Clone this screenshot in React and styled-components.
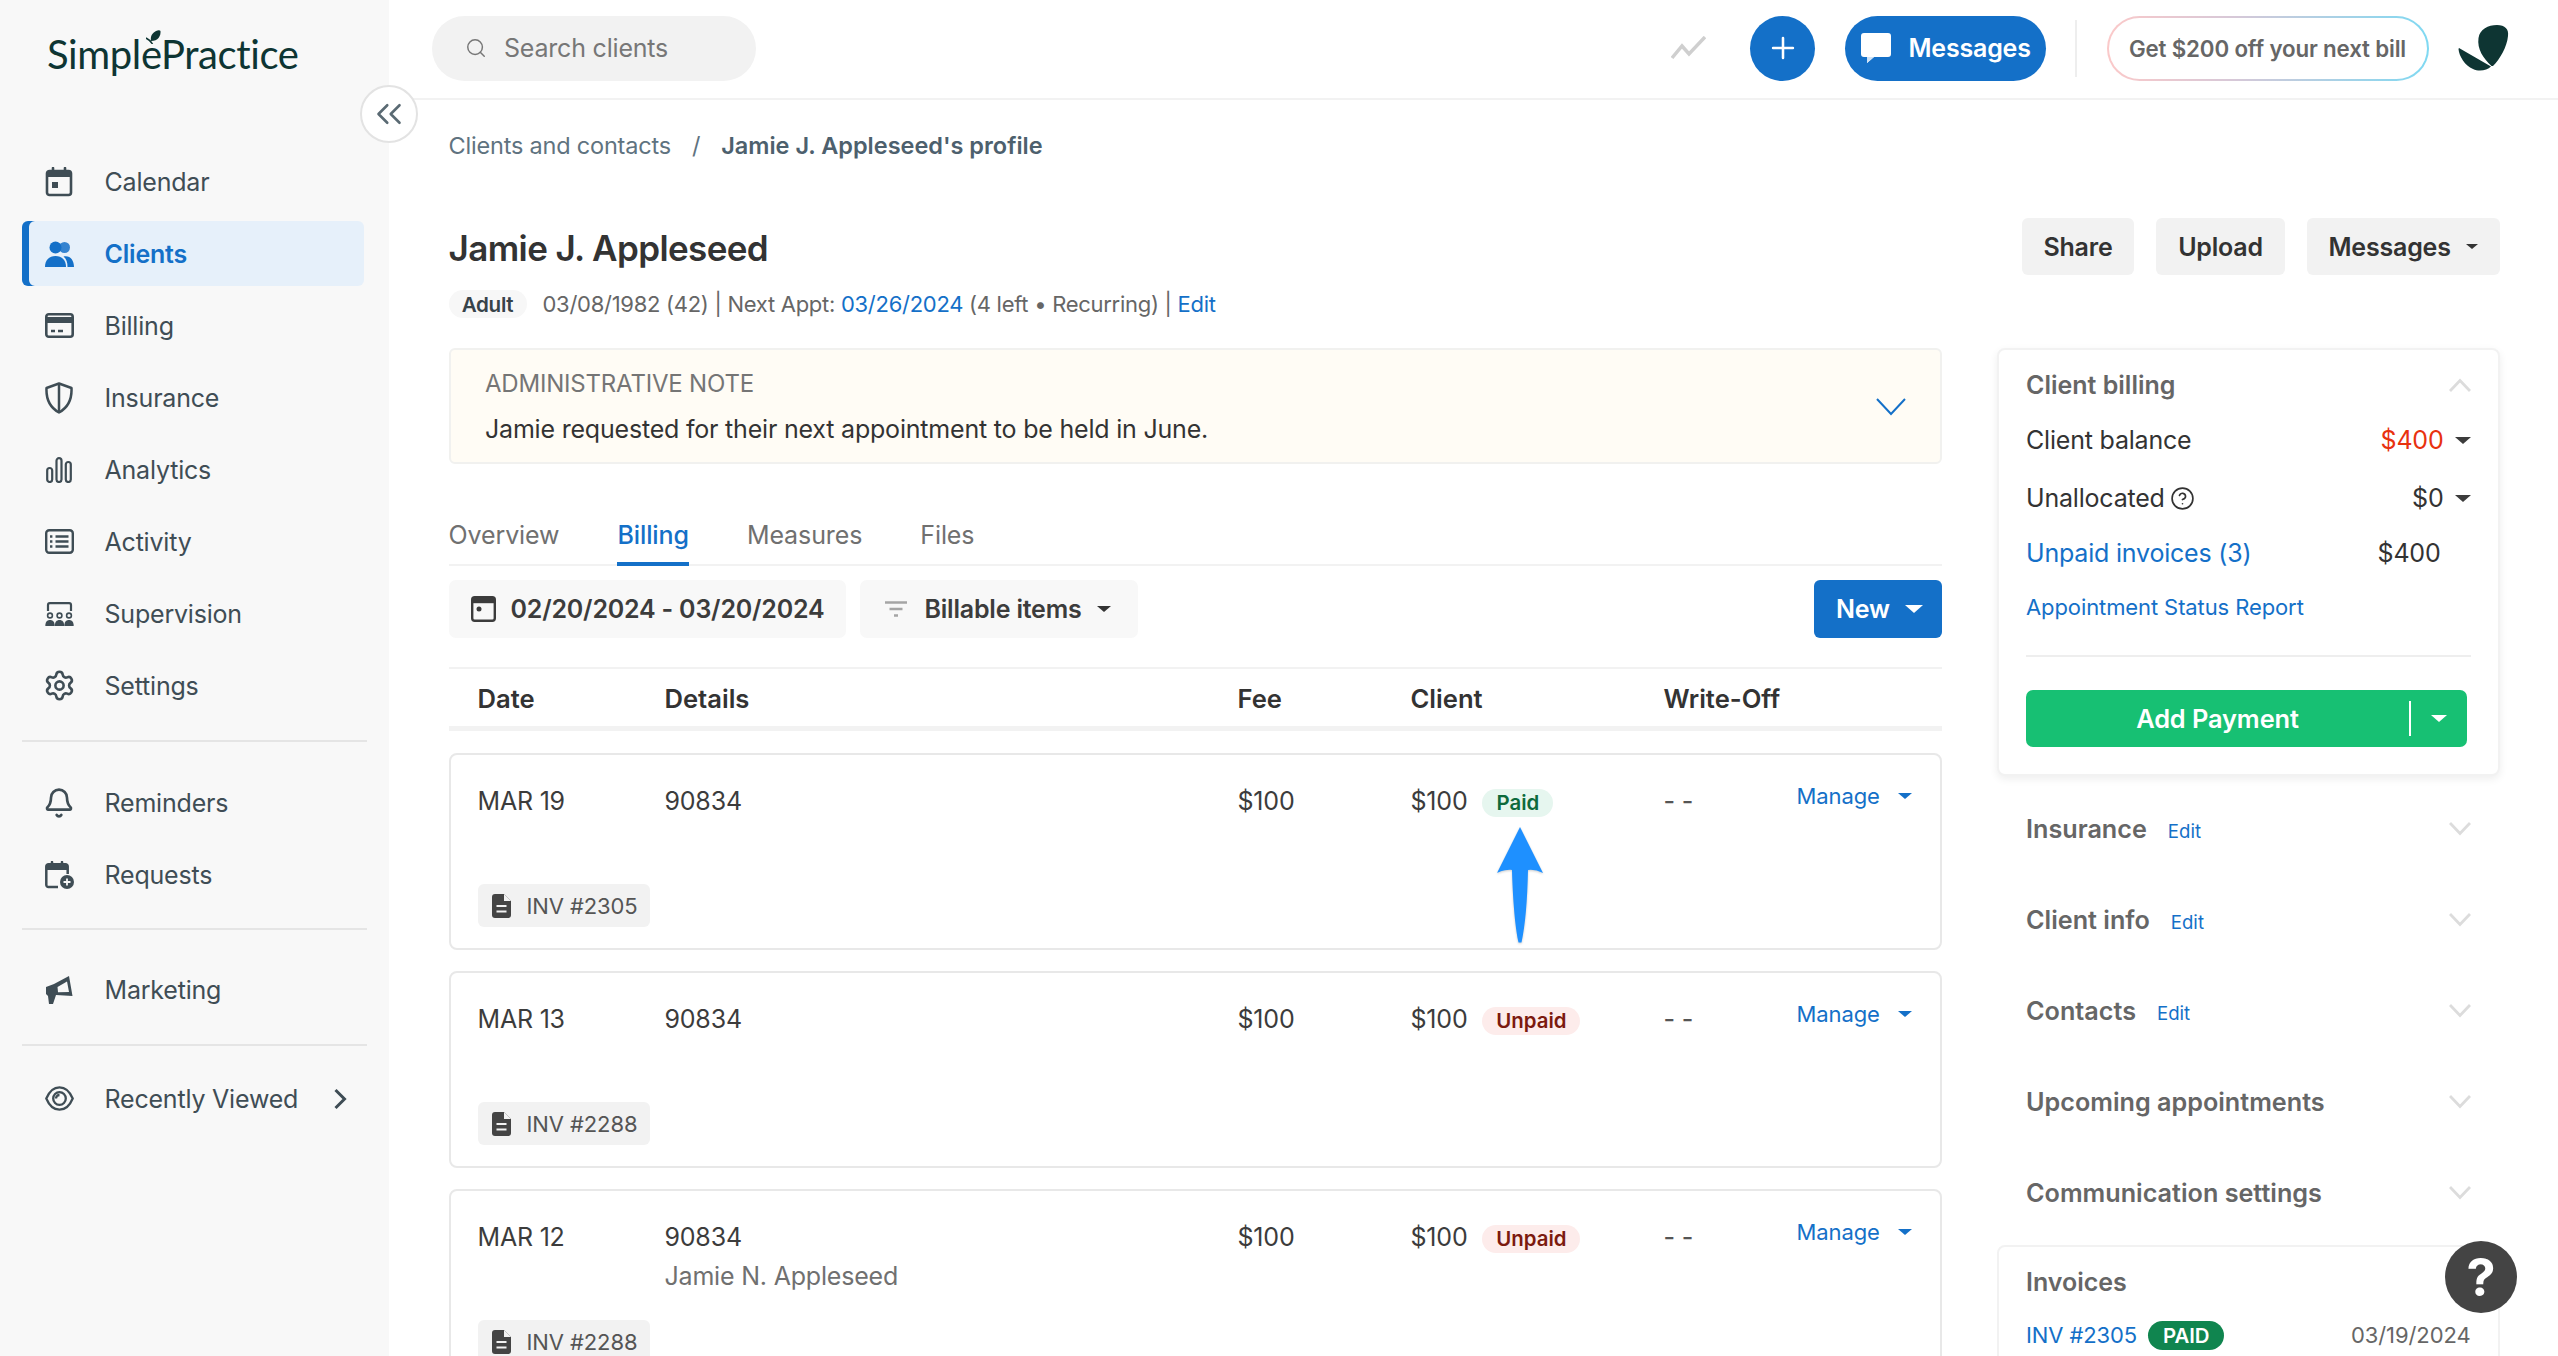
import React from "react";
import styled, { createGlobalStyle } from "styled-components";
import { ChevronsLeft, CircleHelp, Plus, Search, Bell, Settings } from "lucide-react";

const Global = createGlobalStyle`
  html, body { margin: 0; padding: 0; background: #fff; }
  body { font-family: Inter, "Liberation Sans", sans-serif; color: #333; }
  * { box-sizing: border-box; }
`;

const BLUE = "#1470c8";

const Page = styled.div`
  position: relative;
  display: flex;
  width: 2558px;
  height: 1356px;
  overflow: hidden;
  font-size: 25px;
  letter-spacing: -0.2px;
`;

/* ---------- sidebar ---------- */
const Sidebar = styled.aside`
  flex: 0 0 389px;
  background: #f8f8f8;
  padding: 0 22px;
`;
const LogoWrap = styled.div`
  height: 149px;
  padding: 30px 0 0 25px;
`;
const LogoText = styled.div`
  position: relative;
  display: inline-block;
  font-family: Lato, sans-serif;
  font-size: 40px;
  line-height: 48px;
  letter-spacing: -0.4px;
  color: #0e3533;
`;
const LogoLeaf = styled.svg`
  position: absolute;
  left: 99px;
  top: 0;
  width: 15px;
  height: 14px;
`;
const NavGroup = styled.nav`
  display: flex;
  flex-direction: column;
  gap: 7px;
`;
const NavItem = styled.a`
  display: flex;
  align-items: center;
  gap: 31.5px;
  height: 65px;
  padding: 0 17px 0 23px;
  width: 342px;
  border-radius: 6px;
  white-space: nowrap;
  color: ${(p) => (p.$active ? BLUE : "#3f4d55")};
  background: ${(p) => (p.$active ? "#e6f0fa" : "transparent")};
  box-shadow: ${(p) => (p.$active ? `inset 7px 0 0 ${BLUE}` : "none")};
  font-weight: ${(p) => (p.$active ? 600 : 400)};
`;
const NavIcon = styled.span`
  flex: 0 0 28px;
  width: 28px;
  height: 34px;
  display: flex;
  align-items: center;
  justify-content: center;
  svg { display: block; flex: none; }
`;
const NavLabel = styled.span`
  flex: 1;
`;
const NavRule = styled.hr`
  border: 0;
  border-top: 2px solid #e5e5e5;
  margin: ${(p) => p.$top}px 0 ${(p) => p.$bottom}px;
  width: 345px;
`;

/* ---------- main ---------- */
const Main = styled.main`
  flex: 1;
  min-width: 0;
  display: flex;
  flex-direction: column;
`;
const Header = styled.header`
  flex: 0 0 100px;
  display: flex;
  align-items: center;
  gap: 29.5px;
  padding: 0 49px 2px 43px;
  border-bottom: 2px solid #f2f2f2;
`;
const SearchBox = styled.div`
  display: flex;
  align-items: center;
  gap: 17px;
  width: 324px;
  height: 65px;
  padding-left: 33px;
  margin-right: auto;
  border-radius: 33px;
  background: #f2f2f2;
  color: #777;
`;
const RoundPlus = styled.button`
  width: 65px;
  height: 65px;
  padding: 0;
  border: 0;
  border-radius: 50%;
  background: ${BLUE};
  color: #fff;
  display: flex;
  align-items: center;
  justify-content: center;
`;
const TrendIcon = styled.svg`
  width: 35px;
  height: 24px;
  margin-right: 14.5px;
`;
const MessagesPill = styled.button`
  display: flex;
  align-items: center;
  gap: 18px;
  width: 201px;
  height: 65px;
  padding: 0 0 0 16px;
  border: 0;
  border-radius: 33px;
  background: ${BLUE};
  color: #fff;
  font: 600 25px Inter, sans-serif;
  letter-spacing: -0.2px;
`;
const HeadRule = styled.div`
  width: 2px;
  height: 57px;
  background: #eeeeee;
`;
const PromoPill = styled.div`
  display: flex;
  align-items: center;
  justify-content: center;
  width: 322px;
  height: 65px;
  border: 2px solid transparent;
  border-radius: 33px;
  background: linear-gradient(#fff, #fff) padding-box,
    linear-gradient(90deg, #fbc9c9, #d6c8d8 40%, #7fd9f2) border-box;
  color: #666;
  font-weight: 600;
  font-size: 22.3px;
  letter-spacing: -0.15px;
`;
const CollapseButton = styled.button`
  position: absolute;
  left: 360px;
  top: 85px;
  width: 58px;
  height: 58px;
  padding: 0;
  border: 2px solid #e3e3e3;
  border-radius: 50%;
  background: #fff;
  color: #5a6a73;
  display: flex;
  align-items: center;
  justify-content: center;
`;
const Content = styled.div`
  flex: 1;
  min-height: 0;
  padding: 29px 58px 0 59.5px;
`;
const Crumbs = styled.div`
  display: flex;
  align-items: center;
  height: 32px;
  color: #5f7380;
  font-size: 23.5px;
`;
const CrumbSep = styled.span`
  margin: 0 21px;
`;
const CrumbNow = styled.span`
  font-weight: 600;
  color: #4d606d;
  letter-spacing: 0;
`;
const TitleRow = styled.div`
  display: flex;
  align-items: center;
  height: 57px;
  margin-top: 57px;
  gap: 22px;
`;
const Title = styled.h1`
  margin: 0 auto 0 0;
  padding-top: 2px;
  font-size: 35px;
  font-weight: 600;
  letter-spacing: -0.6px;
  color: #333;
`;
const GreyButton = styled.button`
  display: flex;
  align-items: center;
  gap: 15.5px;
  height: 57px;
  padding: 0 21.8px;
  border: 0;
  border-radius: 6px;
  background: #f2f2f2;
  color: #333;
  font: 600 25px Inter, sans-serif;
  letter-spacing: -0.2px;
`;
const Caret = styled.span`
  display: inline-block;
  width: 0;
  height: 0;
  flex: none;
  border-left: ${(p) => p.$size || 7}px solid transparent;
  border-right: ${(p) => p.$size || 7}px solid transparent;
  border-top: ${(p) => (p.$size || 7) - 0.5}px solid ${(p) => p.$color || "#333"};
`;
const MetaRow = styled.div`
  display: flex;
  align-items: center;
  height: 28px;
  margin-top: 15px;
  color: #666;
  font-size: 22px;
  letter-spacing: -0.28px;
`;
const AdultPill = styled.span`
  display: flex;
  align-items: center;
  justify-content: center;
  width: 78px;
  height: 28px;
  margin-right: 16px;
  border-radius: 14px;
  background: #f7f7f7;
  color: #37434a;
  font-weight: 600;
  font-size: 20.6px;
`;
const Link = styled.a`
  color: ${BLUE};
`;
const Columns = styled.div`
  display: flex;
  gap: 54.5px;
  margin-top: 30px;
`;
const LeftCol = styled.div`
  flex: 0 0 1493.5px;
  min-width: 0;
`;
const RightCol = styled.div`
  flex: 0 0 503px;
  display: flex;
  flex-direction: column;
`;

/* note */
const Note = styled.div`
  display: flex;
  align-items: center;
  justify-content: space-between;
  height: 116px;
  padding: 0 34px 0 34.5px;
  background: #fffcf5;
  border: 2px solid #f1f1ef;
  border-radius: 6px;
`;
const NoteTitle = styled.div`
  font-size: 24px;
  line-height: 32px;
  color: #757575;
`;
const NoteBody = styled.div`
  margin-top: 13px;
  line-height: 32px;
  color: #333;
`;
const NoteChevron = styled.svg`
  width: 30px;
  height: 18px;
  margin-top: 2px;
  flex: none;
`;

/* tabs */
const Tabs = styled.div`
  display: flex;
  gap: 58px;
  height: 47px;
  margin-top: 55px;
  border-bottom: 2px solid #f2f2f2;
`;
const Tab = styled.div`
  height: 47px;
  line-height: 32px;
  letter-spacing: -0.1px;
  border-bottom: 4px solid ${(p) => (p.$active ? BLUE : "transparent")};
  color: ${(p) => (p.$active ? BLUE : "#707070")};
  font-weight: ${(p) => (p.$active ? 500 : 400)};
`;

/* toolbar */
const Toolbar = styled.div`
  display: flex;
  align-items: center;
  gap: 14px;
  margin-top: 14px;
  padding-bottom: 29px;
  border-bottom: 2px solid #f2f2f2;
`;
const FilterButton = styled.button`
  display: flex;
  align-items: center;
  gap: ${(p) => p.$gap}px;
  width: ${(p) => p.$width}px;
  height: 58px;
  padding: 0 0 0 ${(p) => p.$left}px;
  border: 0;
  border-radius: 7px;
  background: #f8f8f8;
  color: #3c3c3c;
  font: 600 25px Inter, sans-serif;
  letter-spacing: -0.2px;
`;
const CaretNudge = styled.span`
  display: flex;
  margin-left: -3px;
`;
const NewButton = styled.button`
  display: flex;
  align-items: center;
  gap: 15px;
  margin-left: auto;
  width: 128px;
  height: 58px;
  padding: 0 0 0 22px;
  border: 0;
  border-radius: 6px;
  background: ${BLUE};
  color: #fff;
  font: 600 25px Inter, sans-serif;
  letter-spacing: -0.2px;
`;

/* table */
const cols = "187px 573px 173px 253px 133px 1fr";
const TableHead = styled.div`
  display: grid;
  grid-template-columns: ${cols};
  align-items: center;
  height: 62px;
  padding: 1px 0 0 29px;
  border-bottom: 5px solid #f2f2f2;
  font-weight: 600;
  font-size: 25.6px;
  letter-spacing: 0;
  color: #333;
`;
const Rows = styled.div`
  display: flex;
  flex-direction: column;
  gap: 21px;
  margin-top: 22px;
`;
const Row = styled.div`
  position: relative;
  flex: 0 0 197px;
  display: flex;
  flex-direction: column;
  justify-content: space-between;
  padding: 30px 0 21px 27px;
  border: 2px solid #e8e8e8;
  border-radius: 8px;
`;
const RowGrid = styled.div`
  display: grid;
  grid-template-columns: ${cols};
  align-items: start;
  line-height: 32px;
  color: #3c3c3c;
`;
const SubLine = styled.div`
  margin-top: 7px;
  color: #707070;
`;
const ClientCell = styled.div`
  display: flex;
  align-items: center;
  gap: 15px;
`;
const StatusPill = styled.span`
  display: inline-flex;
  align-items: center;
  justify-content: center;
  width: ${(p) => (p.$unpaid ? 98 : 71)}px;
  height: 28px;
  margin-top: 4px;
  border-radius: 14px;
  font-size: 20.4px;
  letter-spacing: 0;
  font-weight: 600;
  background: ${(p) => (p.$unpaid ? "#fdeceb" : "#e6f6ef")};
  color: ${(p) => (p.$unpaid ? "#7c1a0f" : "#0d6a3c")};
`;
const ManageCell = styled.div`
  display: flex;
  align-items: center;
  gap: 18px;
  margin-top: -5px;
  color: ${BLUE};
  font-size: 22px;
  letter-spacing: -0.1px;
`;
const Dash = styled.span`
  font-weight: 500;
  color: #555;
  letter-spacing: 0;
`;
const InvTag = styled.div`
  display: inline-flex;
  align-items: center;
  align-self: flex-start;
  gap: 16px;
  width: 172px;
  height: 43px;
  padding-left: 14px;
  border-radius: 6px;
  background: #f2f2f2;
  color: #555;
  font-size: 22px;
  letter-spacing: -0.1px;
`;
const UpArrow = styled.svg`
  position: absolute;
  left: 1046px;
  top: 72px;
  width: 46px;
  height: 116px;
  filter: drop-shadow(0 1px 1px rgba(0, 0, 0, 0.2));
`;

/* right cards */
const Card = styled.section`
  background: #fff;
  border: 2px solid #f2f2f2;
  border-radius: 8px;
  padding: 19px 27px 27px 27.5px;
  box-shadow: ${(p) => (p.$flat ? "none" : "0 3px 8px rgba(0,0,0,.07)")};
`;
const CardHead = styled.div`
  display: flex;
  align-items: center;
  justify-content: space-between;
  height: 32px;
  color: #666;
  font-weight: 600;
  letter-spacing: 0;
`;
const BalanceRow = styled.div`
  display: flex;
  align-items: center;
  justify-content: space-between;
  height: 32px;
  margin-top: ${(p) => p.$top}px;
  color: #333;
`;
const Help = styled.span`
  display: inline-flex;
  align-items: center;
  gap: 5px;
`;
const Amount = styled.span`
  display: flex;
  align-items: center;
  gap: 11px;
  color: ${(p) => (p.$red ? "#e8320f" : "#333")};
  padding-right: ${(p) => (p.$plain ? 30 : 0)}px;
`;
const ReportLink = styled.a`
  display: block;
  height: 28px;
  line-height: 28px;
  margin-top: 24px;
  font-size: 22px;
  letter-spacing: -0.1px;
  color: ${BLUE};
`;
const CardRule = styled.hr`
  border: 0;
  border-top: 2px solid #eee;
  margin: 34px 0 33px;
`;
const PayButton = styled.button`
  display: flex;
  align-items: center;
  width: 441px;
  height: 57px;
  padding: 0;
  border: 0;
  border-radius: 7px;
  background: #17c073;
  color: #fff;
  font: 600 25.4px Inter, sans-serif;
  letter-spacing: -0.1px;
`;
const PayLabel = styled.span`
  flex: 1;
  text-align: center;
`;
const PaySplit = styled.span`
  flex: 0 0 58px;
  height: 35px;
  display: flex;
  align-items: center;
  justify-content: center;
  border-left: 2px solid #fff;
`;
const Accordion = styled.div`
  display: flex;
  flex-direction: column;
  gap: 51px;
  margin-top: 33px;
  padding: 0 29px 0 29.5px;
`;
const AccordionRow = styled.div`
  display: flex;
  align-items: center;
  height: 40px;
  color: #666;
  font-weight: 600;
  font-size: 25.2px;
  letter-spacing: 0;
`;
const EditLink = styled.a`
  margin: 4px 0 0 21px;
  font-size: 18.6px;
  font-weight: 400;
  color: ${BLUE};
`;
const ChevronMark = styled.svg`
  width: 22px;
  height: 14px;
  flex: none;
  margin-left: auto;
`;
const InvoicesCard = styled(Card)`
  margin-top: 32px;
  padding-top: 19px;
  height: 200px;
`;
const InvoiceLine = styled.div`
  display: flex;
  align-items: center;
  height: 32px;
  margin-top: 21px;
  font-size: 22px;
  letter-spacing: -0.1px;
`;
const PaidBadge = styled.span`
  display: inline-flex;
  align-items: center;
  justify-content: center;
  width: 76px;
  height: 29px;
  margin-left: 11px;
  border-radius: 15px;
  background: #10854f;
  color: #fff;
  font-size: 20.4px;
  font-weight: 600;
`;
const InvDate = styled.span`
  margin-left: auto;
  color: #666;
`;
const HelpBubble = styled.button`
  position: absolute;
  left: 2445px;
  top: 1241px;
  width: 72px;
  height: 72px;
  padding: 0;
  border: 0;
  border-radius: 50%;
  background: #444;
  color: #fff;
  font: 700 52px Inter, sans-serif;
  display: flex;
  align-items: center;
  justify-content: center;
`;
const BrandMark = styled.svg`
  flex: 0 0 51px;
  width: 51px;
  height: 48px;
`;

/* ---------- drawn icons ---------- */
const ic = "#3f4d55";
const CalendarIcon = () => (
  <svg width="28" height="30" viewBox="0 0 28 30" fill="none">
    <path d="M8 1v5M20 1v5" stroke={ic} strokeWidth="2.6" strokeLinecap="round" />
    <rect x="2" y="4" width="24" height="24" rx="2.5" stroke={ic} strokeWidth="2.6" />
    <rect x="2" y="4" width="24" height="6" fill={ic} />
    <rect x="7" y="15" width="6" height="6" fill={ic} />
  </svg>
);
const ClientsIcon = () => (
  <svg width="29" height="26" viewBox="0 0 29 26" fill={BLUE}>
    <circle cx="19.5" cy="6.5" r="5.5" opacity=".85" />
    <circle cx="10.5" cy="6.5" r="6" />
    <path d="M0 26c0-7 4-11 10.5-11S21 19 21 26z" />
    <path d="M22.5 26c0-4.5-1-8-4-10.5 6.5-1.5 10.5 3.5 10.5 10.5z" />
  </svg>
);
const BillingIcon = () => (
  <svg width="29" height="25" viewBox="0 0 29 25" fill="none">
    <rect x="1.3" y="1.3" width="26.4" height="22.4" rx="2.5" stroke={ic} strokeWidth="2.6" />
    <rect x="1.3" y="4" width="26.4" height="6" fill={ic} />
    <path d="M6 18h4M13 18h5" stroke={ic} strokeWidth="2.6" />
  </svg>
);
const ShieldIcon = () => (
  <svg width="28" height="32" viewBox="0 0 28 32" fill="none" stroke={ic} strokeWidth="2.5" strokeLinejoin="round">
    <path d="M14 1.5 26.5 6c.5 11-2.5 19-12.5 24.5C4 25 1 17 1.5 6z" />
    <path d="M14 1.5v29" />
  </svg>
);
const AnalyticsIcon = () => (
  <svg width="26" height="26" viewBox="0 0 26 26" fill="none" stroke={ic} strokeWidth="2.2">
    <rect x="1.2" y="11" width="5" height="14" rx="2.5" />
    <rect x="10.5" y="1.2" width="5" height="23.8" rx="2.5" />
    <rect x="19.8" y="5" width="5" height="20" rx="2.5" />
  </svg>
);
const ActivityIcon = () => (
  <svg width="29" height="25" viewBox="0 0 29 25" fill="none" stroke={ic} strokeWidth="2.4">
    <rect x="1.2" y="1.2" width="26.6" height="22.6" rx="3" />
    <path d="M10.5 7.5h13M10.5 12.5h13M10.5 17.5h13" />
    <path d="M5 7.5h2.4M5 12.5h2.4M5 17.5h2.4" />
  </svg>
);
const SupervisionIcon = () => (
  <svg width="29" height="24" viewBox="0 0 29 24" fill={ic}>
    <path d="M3 9V3a1.8 1.8 0 0 1 1.8-1.8h19.4A1.8 1.8 0 0 1 26 3v6" fill="none" stroke={ic} strokeWidth="2.2" />
    {[5, 14.5, 24].map((x) => (
      <g key={x}>
        <circle cx={x} cy="13.5" r="2.4" fill="#f8f8f8" stroke={ic} strokeWidth="1.6" />
        <path d={`M${x - 4.7} 24c0-4 1.7-6 4.7-6s4.7 2 4.7 6z`} />
      </g>
    ))}
  </svg>
);
const RequestsIcon = () => (
  <svg width="29" height="28" viewBox="0 0 29 28" fill="none">
    <path d="M7 1v4M17 1v4" stroke={ic} strokeWidth="2.5" strokeLinecap="round" />
    <path d="M13 26H3.5A2.2 2.2 0 0 1 1.3 24V5.5a2.2 2.2 0 0 1 2.2-2.2h17a2.2 2.2 0 0 1 2.2 2.2V13" stroke={ic} strokeWidth="2.5" />
    <rect x="1.3" y="4" width="21.4" height="5" fill={ic} />
    <circle cx="22" cy="21" r="7" fill={ic} />
    <path d="M22 17.5v7M18.5 21h7" stroke="#f8f8f8" strokeWidth="1.8" />
  </svg>
);
const MegaphoneIcon = () => (
  <svg width="28" height="28" viewBox="0 0 28 28" fill={ic}>
    <path d="M1 11 9 8 24 0l3.5 20L11 19l-3 9H4l-1-8-2-2z" />
    <path d="M12.5 11 22 5.5 24 16l-11 .2z" fill="#f8f8f8" />
  </svg>
);
const EyeIcon = () => (
  <svg width="29" height="25" viewBox="0 0 29 25" fill="none" stroke={ic} strokeWidth="2.3">
    <path d="M1.3 12.5C4 6 9 1.3 14.5 1.3S25 6 27.7 12.5C25 19 20 23.7 14.5 23.7S4 19 1.3 12.5z" />
    <circle cx="14.5" cy="12.5" r="6.3" />
    <path d="M11 12.5A3.5 3.5 0 0 1 14.5 9" />
  </svg>
);
const NavChevron = () => (
  <svg width="14" height="22" viewBox="0 0 14 22" fill="none" stroke={ic} strokeWidth="3">
    <path d="M2.5 2l9 9-9 9" />
  </svg>
);
const BubbleIcon = () => (
  <svg width="30" height="30" viewBox="0 0 30 30" fill="#fff">
    <path d="M3 0h24a3 3 0 0 1 3 3v18a3 3 0 0 1-3 3H13l-7 6 0-6H3a3 3 0 0 1-3-3V3a3 3 0 0 1 3-3z" />
    <path d="M13 24l-7 6 0-6z" fill="#cfe2f5" />
  </svg>
);
const SmallCalendar = () => (
  <svg width="25" height="26" viewBox="0 0 25 26" fill="none">
    <rect x="1.2" y="1.2" width="22.6" height="23.6" rx="2.5" stroke="#3c3c3c" strokeWidth="2.4" />
    <rect x="1.2" y="1.2" width="22.6" height="6" fill="#3c3c3c" />
    <circle cx="8" cy="13" r="2.5" fill="#3c3c3c" />
  </svg>
);
const FilterIcon = () => (
  <svg width="22" height="16" viewBox="0 0 22 16" fill="none" stroke="#a5a5a5" strokeWidth="2.4">
    <path d="M0 1.5h22M4.5 8h13M9 14.5h4" />
  </svg>
);
const FileIcon = () => (
  <svg width="19" height="24" viewBox="0 0 19 24" fill="#444">
    <path d="M3 0h9l7 7v14a3 3 0 0 1-3 3H3a3 3 0 0 1-3-3V3a3 3 0 0 1 3-3z" />
    <path d="M12 0v7h7z" fill="#f2f2f2" />
    <path d="M4.5 12h10M4.5 17.5h10" stroke="#f2f2f2" strokeWidth="2.2" />
  </svg>
);
const Chevron = ({ up }) => (
  <ChevronMark viewBox="0 0 22 14" fill="none" stroke="#dcdcdc" strokeWidth="2.8">
    <path d={up ? "M1 13 11 2.5 21 13" : "M1 1l10 10.5L21 1"} />
  </ChevronMark>
);

const navTop = [
  ["Calendar", <CalendarIcon />],
  ["Clients", <ClientsIcon />, true],
  ["Billing", <BillingIcon />],
  ["Insurance", <ShieldIcon />],
  ["Analytics", <AnalyticsIcon />],
  ["Activity", <ActivityIcon />],
  ["Supervision", <SupervisionIcon />],
  ["Settings", <Settings size={33} color={ic} strokeWidth={1.9} />],
];

const NavLink = ({ label, icon, active, children }) => (
  <NavItem $active={active}>
    <NavIcon>{icon}</NavIcon>
    <NavLabel>{label}</NavLabel>
    {children}
  </NavItem>
);

const rows = [
  { date: "MAR 19", inv: "INV #2305", paid: true },
  { date: "MAR 13", inv: "INV #2288" },
  { date: "MAR 12", inv: "INV #2288", sub: "Jamie N. Appleseed" },
];

const accordion = [
  ["Insurance", true],
  ["Client info", true],
  ["Contacts", true],
  ["Upcoming appointments", false],
  ["Communication settings", false],
];

export default function App() {
  return (
    <Page>
      <Global />
      <Sidebar>
        <LogoWrap>
          <LogoText>
            SimplePractice
            <LogoLeaf viewBox="0 0 15 14" fill="none">
              <path d="M5 11C4 5 7 3 10 1c2-1 4-1 4.5 0C15 6 12 11 5 11z" fill="#0e3533" />
              <path d="M0 8c2 1 5 3 6.5 6" stroke="#0e3533" strokeWidth="1.6" />
            </LogoLeaf>
          </LogoText>
        </LogoWrap>
        <NavGroup>
          {navTop.map(([label, icon, active]) => (
            <NavLink key={label} label={label} icon={icon} active={active} />
          ))}
        </NavGroup>
        <NavRule $top={22} $bottom={28} />
        <NavGroup>
          <NavLink label="Reminders" icon={<Bell size={32} color={ic} strokeWidth={2} />} />
          <NavLink label="Requests" icon={<RequestsIcon />} />
        </NavGroup>
        <NavRule $top={21} $bottom={27} />
        <NavGroup>
          <NavLink label="Marketing" icon={<MegaphoneIcon />} />
        </NavGroup>
        <NavRule $top={22} $bottom={20} />
        <NavGroup>
          <NavLink label="Recently Viewed" icon={<EyeIcon />}>
            <NavChevron />
          </NavLink>
        </NavGroup>
      </Sidebar>

      <CollapseButton aria-label="Collapse">
        <ChevronsLeft size={42} strokeWidth={1.5} />
      </CollapseButton>

      <Main>
        <Header>
          <SearchBox>
            <Search size={22} strokeWidth={1.6} color="#777" />
            Search clients
          </SearchBox>
          <TrendIcon viewBox="0 0 35 24" fill="none">
            <path d="M1 22 11 10l7 8L34 1" stroke="#cfcfcf" strokeWidth="3.5" />
          </TrendIcon>
          <RoundPlus aria-label="New">
            <Plus size={34} strokeWidth={1.8} />
          </RoundPlus>
          <MessagesPill>
            <BubbleIcon />
            Messages
          </MessagesPill>
          <HeadRule />
          <PromoPill>Get $200 off your next bill</PromoPill>
          <BrandMark viewBox="8 8 51 48">
            <path d="M41.5 50C33 42 27 33 28.5 22 30 13 38 9 47 9c8 0 12 4 11 11-1 11-8 23-15 30z" fill="#0e3533" />
            <path d="M9 32l32 18.5C37 54.5 29 56 23 53 15 50 9 40 8.5 33z" fill="#0e3533" />
          </BrandMark>
        </Header>

        <Content>
          <Crumbs>
            Clients and contacts
            <CrumbSep>/</CrumbSep>
            <CrumbNow>Jamie J. Appleseed's profile</CrumbNow>
          </Crumbs>
          <TitleRow>
            <Title>Jamie J. Appleseed</Title>
            <GreyButton>Share</GreyButton>
            <GreyButton>Upload</GreyButton>
            <GreyButton>
              Messages
              <Caret $size={6} />
            </GreyButton>
          </TitleRow>
          <MetaRow>
            <AdultPill>Adult</AdultPill>
            03/08/1982 (42) | Next Appt:&nbsp;<Link>03/26/2024</Link>&nbsp;(4 left • Recurring) |&nbsp;<Link>Edit</Link>
          </MetaRow>

          <Columns>
            <LeftCol>
              <Note>
                <div>
                  <NoteTitle>ADMINISTRATIVE NOTE</NoteTitle>
                  <NoteBody>Jamie requested for their next appointment to be held in June.</NoteBody>
                </div>
                <NoteChevron viewBox="0 0 30 18" fill="none" stroke={BLUE} strokeWidth="2">
                  <path d="M1 1l14 15L29 1" />
                </NoteChevron>
              </Note>

              <Tabs>
                <Tab>Overview</Tab>
                <Tab $active>Billing</Tab>
                <Tab>Measures</Tab>
                <Tab>Files</Tab>
              </Tabs>

              <Toolbar>
                <FilterButton $gap={15} $left={22} $width={397}>
                  <SmallCalendar />
                  02/20/2024 - 03/20/2024
                </FilterButton>
                <FilterButton $gap={18} $left={25} $width={278}>
                  <FilterIcon />
                  Billable items
                  <CaretNudge>
                    <Caret />
                  </CaretNudge>
                </FilterButton>
                <NewButton>
                  New
                  <Caret $size={9} $color="#fff" />
                </NewButton>
              </Toolbar>

              <TableHead>
                <span>Date</span>
                <span>Details</span>
                <span>Fee</span>
                <span>Client</span>
                <span>Write-Off</span>
              </TableHead>

              <Rows>
                {rows.map((r) => (
                  <Row key={r.date}>
                    <RowGrid>
                      <span>{r.date}</span>
                      <div>
                        90834
                        {r.sub && <SubLine>{r.sub}</SubLine>}
                      </div>
                      <span>$100</span>
                      <ClientCell>
                        $100
                        <StatusPill $unpaid={!r.paid}>{r.paid ? "Paid" : "Unpaid"}</StatusPill>
                      </ClientCell>
                      <Dash>- -</Dash>
                      <ManageCell>
                        Manage
                        <Caret $color={BLUE} />
                      </ManageCell>
                    </RowGrid>
                    <InvTag>
                      <FileIcon />
                      {r.inv}
                    </InvTag>
                    {r.paid && (
                      <UpArrow viewBox="0 0 46 116">
                        <path d="M23 0 46 46Q38 42 31 43 30 90 24.5 115.5h-3C16 90 15 43 15 43 8 42 0 46 0 46z" fill="#1e90ff" />
                      </UpArrow>
                    )}
                  </Row>
                ))}
              </Rows>
            </LeftCol>

            <RightCol>
              <Card>
                <CardHead>
                  Client billing
                  <Chevron up />
                </CardHead>
                <BalanceRow $top={23}>
                  Client balance
                  <Amount $red>
                    $400
                    <Caret $size={8} $color="#3c3c3c" />
                  </Amount>
                </BalanceRow>
                <BalanceRow $top={26}>
                  <Help>
                    Unallocated
                    <CircleHelp size={25} strokeWidth={1.6} />
                  </Help>
                  <Amount>
                    $0
                    <Caret $size={8} $color="#3c3c3c" />
                  </Amount>
                </BalanceRow>
                <BalanceRow $top={23}>
                  <Link>Unpaid invoices (3)</Link>
                  <Amount $plain>$400</Amount>
                </BalanceRow>
                <ReportLink>Appointment Status Report</ReportLink>
                <CardRule />
                <PayButton>
                  <PayLabel>Add Payment</PayLabel>
                  <PaySplit>
                    <Caret $size={8} $color="#fff" />
                  </PaySplit>
                </PayButton>
              </Card>

              <Accordion>
                {accordion.map(([label, edit]) => (
                  <AccordionRow key={label}>
                    {label}
                    {edit && <EditLink>Edit</EditLink>}
                    <Chevron />
                  </AccordionRow>
                ))}
              </Accordion>

              <InvoicesCard $flat>
                <CardHead>Invoices</CardHead>
                <InvoiceLine>
                  <Link>INV #2305</Link>
                  <PaidBadge>PAID</PaidBadge>
                  <InvDate>03/19/2024</InvDate>
                </InvoiceLine>
              </InvoicesCard>
            </RightCol>
          </Columns>
        </Content>
      </Main>

      <HelpBubble aria-label="Help">?</HelpBubble>
    </Page>
  );
}
